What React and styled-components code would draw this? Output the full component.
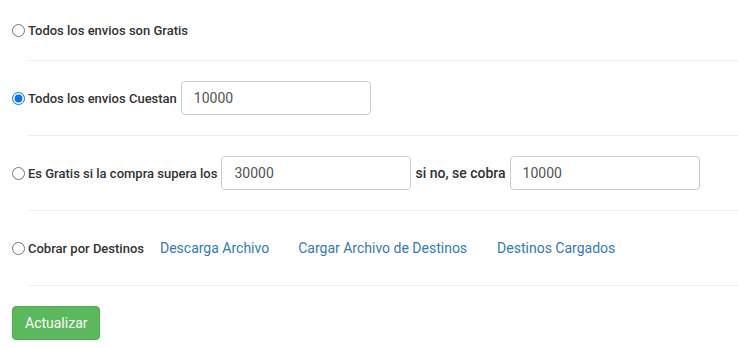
import styled, { createGlobalStyle } from "styled-components";

const Global = createGlobalStyle`
  body {
    margin: 0;
    background: #fff;
    font-family: Roboto, "Liberation Sans", sans-serif;
    color: #333;
  }
`;

const Form = styled.div`
  padding: 20px 0 0 12px;
`;

const Row = styled.div`
  display: flex;
  align-items: center;
  min-height: ${(p) => p.$h || 20}px;
`;

const Rule = styled.hr`
  border: 0;
  border-top: 1px solid #eee;
  margin: 20px 0 20px 15px;
`;

const Radio = styled.input`
  width: 13px;
  height: 13px;
  margin: 0 3px 0 0;
`;

const Label = styled.label`
  font-size: ${(p) => p.$size || 13}px;
  font-weight: 500;
  margin: 0 4px 0 ${(p) => p.$ml || 0}px;
  white-space: nowrap;
`;

const Field = styled.input`
  box-sizing: border-box;
  width: 190px;
  height: 34px;
  padding: 6px 12px;
  font-family: inherit;
  font-size: 14px;
  color: #555;
  border: 1px solid #ccc;
  border-radius: 4px;
  margin: 0;
`;

const Link = styled.a`
  font-size: 14px;
  color: #337ab7;
  text-decoration: none;
  margin-left: ${(p) => p.$ml || 0}px;
  cursor: pointer;
`;

const Button = styled.button`
  font-family: inherit;
  font-size: 14px;
  color: #fff;
  background: #5cb85c;
  border: 1px solid #4cae4c;
  border-radius: 4px;
  padding: 0 12px;
  height: 34px;
  width: 88px;
`;

export default function App() {
  return (
    <>
      <Global />
      <Form>
        <Row>
          <Radio type="radio" name="envio" />
          <Label>Todos los envios son Gratis</Label>
        </Row>
        <Rule />
        <Row $h={34}>
          <Radio type="radio" name="envio" defaultChecked />
          <Label>Todos los envios Cuestan</Label>
          <Field defaultValue="10000" />
        </Row>
        <Rule />
        <Row $h={34}>
          <Radio type="radio" name="envio" />
          <Label>Es Gratis si la compra supera los</Label>
          <Field defaultValue="30000" />
          <Label $size={14} $ml={4}>si no, se cobra</Label>
          <Field defaultValue="10000" />
        </Row>
        <Rule />
        <Row $h={34}>
          <Radio type="radio" name="envio" />
          <Label>Cobrar por Destinos</Label>
          <Link $ml={12}>Descarga Archivo</Link>
          <Link $ml={29}>Cargar Archivo de Destinos</Link>
          <Link $ml={30}>Destinos Cargados</Link>
        </Row>
        <Rule />
        <Button>Actualizar</Button>
      </Form>
    </>
  );
}
